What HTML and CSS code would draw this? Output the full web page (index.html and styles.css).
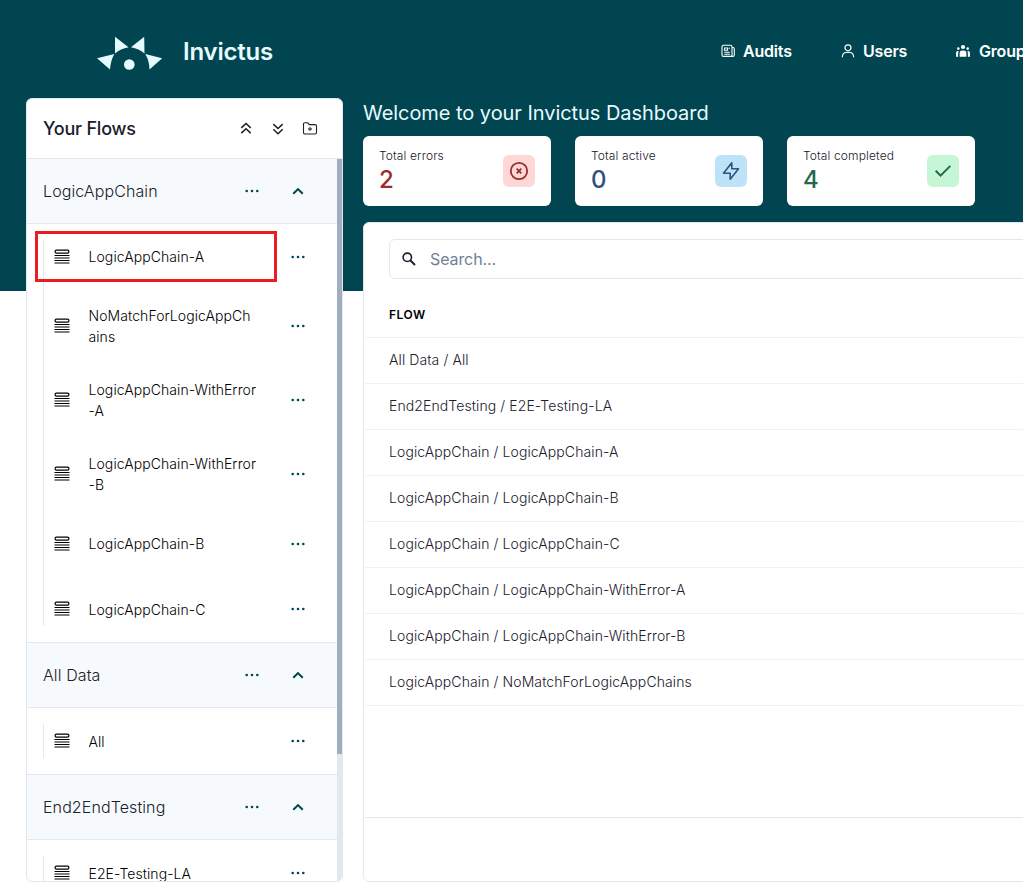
FILE: index.html
```html
<!DOCTYPE html>
<html lang="en">
<head>
<meta charset="utf-8">
<title>Invictus Dashboard</title>
<link rel="stylesheet" href="styles.css">
</head>
<body>
<svg class="defs" width="0" height="0">
  <symbol id="dots" viewBox="0 0 16 16"><circle cx="2.7" cy="8" r="1.3"/><circle cx="8" cy="8" r="1.3"/><circle cx="13.3" cy="8" r="1.3"/></symbol>
  <symbol id="up" viewBox="0 0 16 16"><path d="M3.3 10.8 8 6.1l4.700 4.700" fill="none" stroke="currentColor" stroke-width="2"/></symbol>
  <symbol id="stack" viewBox="0 0 16 16"><rect x="1.100" y="1.100" width="13.800" height="3" rx="1.300" fill="none" stroke="currentColor" stroke-width="1.200"/><path d="M.5 6.500h15M.5 9h15M.5 11.500h15M.5 14h15" fill="none" stroke="currentColor" stroke-width="1.200"/></symbol>
</svg>
<div class="page">
  <header class="topbar">
    <div class="brand">
      <svg class="logo" width="66" height="36" viewBox="0 0 66 36" fill="#e6fbff">
        <path d="M18 1.800 31.500 12.200Q23.500 13.500 18 18.500Z"/>
        <path d="M47.200 1.800 34 12.200Q42 13.500 47.500 18.500Z"/>
        <path d="M0 23.200 17.300 19Q13.500 26 13 34.500Z"/>
        <path d="M65.200 23.200 48.200 19Q52.500 26 52.500 34.500Z"/>
        <circle cx="32.300" cy="29.500" r="5.300"/>
      </svg>
      <span class="brand-name">Invictus</span>
    </div>
    <nav class="nav">
      <a class="nav-item audits"><svg width="14" height="14" viewBox="0 0 14 14" fill="none" stroke="currentColor" stroke-width="1.100"><rect x="1" y="1.200" width="10" height="11.200" rx="1.500"/><path d="M11 3.500h1q1.300 0 1.300 1.300v6.100q0 1.500-1.500 1.500H10"/><path d="M3.500 4h3v2.300h-3zM7.500 4.200h1.400M3.300 8.200h5.500M3.300 10.200h5.500"/></svg><span>Audits</span></a>
      <a class="nav-item users"><svg width="14" height="14" viewBox="0 0 14 14" fill="none" stroke="currentColor" stroke-width="1.200"><circle cx="7" cy="3.800" r="3"/><path d="M1.300 13.200q.2-4.700 4.200-4.700h3q4 0 4.200 4.700"/></svg><span>Users</span></a>
      <a class="nav-item groups"><svg width="16" height="14" viewBox="0 0 16 14" fill="currentColor"><circle cx="8" cy="3" r="2.100"/><circle cx="3.300" cy="4.600" r="1.300"/><circle cx="12.700" cy="4.600" r="1.300"/><path d="M4.600 12.700V9.500q0-3 2.500-3h1.800q2.500 0 2.500 3v3.200zM1 12.700V9.300q0-2.200 1.700-2.200h.9q-.7 1.200-.5 5.600zM15 12.700V9.300q0-2.200-1.700-2.200h-.9q.7 1.200.5 5.600z"/></svg><span>Groups</span></a>
    </nav>
  </header>
  <main class="content">
    <aside class="sidebar">
      <div class="side-head">
        <h2>Your Flows</h2>
        <div class="tools">
          <svg width="16" height="16" viewBox="0 0 16 16" fill="none" stroke="currentColor" stroke-width="1.500"><path d="m3.300 6.900 4.700-4.400 4.700 4.400M3.300 12.100 8 7.700l4.700 4.400"/></svg>
          <svg width="16" height="16" viewBox="0 0 16 16" fill="none" stroke="currentColor" stroke-width="1.500"><path d="M3.300 3.100 8 7.500l4.700-4.400M3.300 8.300 8 12.700l4.700-4.400"/></svg>
          <svg width="16" height="16" viewBox="0 0 16 16" fill="none" stroke="currentColor" stroke-width="1.100"><path d="M1.500 3q0-1.200 1.200-1.200h3.100l1.500 1.800h5.700q1.500 0 1.500 1.300v6.700q0 1.400-1.400 1.400H2.900q-1.400 0-1.400-1.400z"/><path d="M8 6v4M6 8h4" stroke-width="1.300" stroke-opacity=".8"/></svg>
        </div>
      </div>
      <div class="side-scroll">
        <div class="side-list">
          <div class="group"><span>LogicAppChain</span><svg><use href="#dots"/></svg><svg><use href="#up"/></svg></div>
          <div class="flows"><div class="flows-in">
            <div class="flow"><svg class="st"><use href="#stack"/></svg><span>LogicAppChain-A</span><svg class="dt"><use href="#dots"/></svg><i class="marker"></i></div>
            <div class="flow"><svg class="st"><use href="#stack"/></svg><span>NoMatchForLogicAppCh<br>ains</span><svg class="dt"><use href="#dots"/></svg></div>
            <div class="flow"><svg class="st"><use href="#stack"/></svg><span>LogicAppChain-WithError<br>-A</span><svg class="dt"><use href="#dots"/></svg></div>
            <div class="flow"><svg class="st"><use href="#stack"/></svg><span>LogicAppChain-WithError<br>-B</span><svg class="dt"><use href="#dots"/></svg></div>
            <div class="flow"><svg class="st"><use href="#stack"/></svg><span>LogicAppChain-B</span><svg class="dt"><use href="#dots"/></svg></div>
            <div class="flow"><svg class="st"><use href="#stack"/></svg><span>LogicAppChain-C</span><svg class="dt"><use href="#dots"/></svg></div>
          </div></div>
          <div class="group"><span>All Data</span><svg><use href="#dots"/></svg><svg><use href="#up"/></svg></div>
          <div class="flows single"><div class="flows-in">
            <div class="flow"><svg class="st"><use href="#stack"/></svg><span>All</span><svg class="dt"><use href="#dots"/></svg></div>
          </div></div>
          <div class="group"><span>End2EndTesting</span><svg><use href="#dots"/></svg><svg><use href="#up"/></svg></div>
          <div class="flows"><div class="flows-in">
            <div class="flow"><svg class="st"><use href="#stack"/></svg><span>E2E-Testing-LA</span><svg class="dt"><use href="#dots"/></svg></div>
          </div></div>
        </div>
        <div class="track"><div class="thumb"></div></div>
      </div>
    </aside>
    <section class="main">
      <h1>Welcome to your Invictus Dashboard</h1>
      <div class="cards">
        <div class="card red"><div><p>Total errors</p><b>2</b></div><div class="badge"><svg width="20" height="20" viewBox="0 0 20 20" fill="none" stroke="currentColor" stroke-width="1.800"><circle cx="10" cy="10" r="8.200"/><path d="m7.700 7.700 4.600 4.600M12.300 7.700l-4.600 4.600"/></svg></div></div>
        <div class="card blue"><div><p>Total active</p><b>0</b></div><div class="badge"><svg width="20" height="20" viewBox="0 0 20 20" fill="none" stroke="currentColor" stroke-width="1.600" stroke-linejoin="round"><path d="M10.800 1.800v6h6.700L9.200 18.200v-6H2.500z"/></svg></div></div>
        <div class="card green"><div><p>Total completed</p><b>4</b></div><div class="badge"><svg width="20" height="20" viewBox="0 0 20 20" fill="none" stroke="currentColor" stroke-width="2"><path d="m2.700 9.700 4.900 4.900 9.700-9.700"/></svg></div></div>
      </div>
      <div class="panel">
        <div class="search"><svg width="16" height="16" viewBox="0 0 16 16" fill="none" stroke="#1a202c" stroke-width="1.600"><circle cx="6.300" cy="6.300" r="4.200"/><path d="m9.500 9.500 4.500 4.500" stroke-width="1.900"/></svg><span>Search...</span></div>
        <div class="table">
          <div class="th">FLOW</div>
          <div class="tr">All Data / All</div>
          <div class="tr">End2EndTesting / E2E-Testing-LA</div>
          <div class="tr">LogicAppChain / LogicAppChain-A</div>
          <div class="tr">LogicAppChain / LogicAppChain-B</div>
          <div class="tr">LogicAppChain / LogicAppChain-C</div>
          <div class="tr">LogicAppChain / LogicAppChain-WithError-A</div>
          <div class="tr">LogicAppChain / LogicAppChain-WithError-B</div>
          <div class="tr">LogicAppChain / NoMatchForLogicAppChains</div>
        </div>
        <div class="foot"></div>
      </div>
    </section>
  </main>
</div>
</body>
</html>
```

FILE: styles.css
```css
* { box-sizing: border-box; margin: 0; padding: 0; }
body { font-family: Inter, "Liberation Sans", sans-serif; color: #1a202c; overflow: hidden; background: #fff; }
.defs { display: block; height: 0; }
svg { flex: none; display: block; }
.page { height: 895px; overflow: hidden; background: linear-gradient(#00454f 291px, #fff 291px); }
.topbar { height: 98px; display: flex; align-items: flex-start; justify-content: space-between; padding-left: 97px; }
.brand { display: flex; gap: 20px; padding-top: 35px; }
.brand-name { font-size: 24px; font-weight: 600; line-height: 34px; letter-spacing: -.2px; color: #e6fbff; }
.nav { display: flex; width: 302px; padding-top: 39px; overflow: hidden; white-space: nowrap; color: #fff; font-size: 16px; font-weight: 600; line-height: 25px; letter-spacing: -.2px; }
.nav-item { display: flex; align-items: center; gap: 8px; flex: none; }
.nav-item svg { margin-top: -1px; }
.audits { width: 120px; }
.users { width: 114px; }
.content { display: flex; gap: 20px; padding-left: 26px; }
.sidebar { width: 317px; height: 784px; flex: none; display: flex; flex-direction: column; background: #fff; border: 1px solid #e2e8f0; border-radius: 6px; overflow: hidden; }
.side-head { height: 60px; flex: none; border-bottom: 1px solid #e2e8f0; display: flex; justify-content: space-between; align-items: center; padding: 0 24px 0 16px; }
.side-head h2 { font-size: 18px; font-weight: 500; letter-spacing: -.2px; }
.tools { display: flex; gap: 16px; }
.side-scroll { flex: 1; min-height: 0; display: flex; }
.side-list { flex: 1; overflow: hidden; }
.track { width: 5px; background: #e2e8f0; }
.thumb { height: 595px; background: #a0aec0; }
.group { height: 65px; display: flex; align-items: center; background: #f7fafc; border-bottom: 1px solid #e2e8f0; padding: 0 31px 0 16px; font-size: 16px; font-weight: 300; gap: 30px; letter-spacing: .1px; }
.flows + .group { height: 66px; border-top: 1px solid #e2e8f0; }
.group span { flex: 1; }
.group svg { width: 16px; height: 16px; color: #00454f; fill: currentColor; }
.flows { padding: 16px; }
.flows-in { display: flex; flex-direction: column; gap: 32px; border-left: 1px solid #e2e8f0; }
.flow { position: relative; min-height: 33.330px; display: flex; align-items: center; padding: 0 15px 0 10px; font-size: 14px; font-weight: 300; line-height: 21px; letter-spacing: .08px; color: #000; }
.single .flow { min-height: 34.500px; }
.flow span { flex: 1; margin-left: 18.500px; white-space: nowrap; }
.flow svg { width: 16px; height: 16px; }
.flow .dt { fill: #00454f; }
.marker { position: absolute; left: -9px; top: -9px; width: 242px; height: 51px; border: 3px solid #ed1c24; }
.main { flex: 1; min-width: 0; }
.main h1 { font-size: 20px; font-weight: 400; line-height: 30px; height: 38px; letter-spacing: -.05px; color: #e6fbff; white-space: nowrap; }
.cards { display: flex; gap: 24px; }
.card { width: 188px; height: 70px; background: #fff; border-radius: 6px; padding: 12px 16px; display: flex; justify-content: space-between; align-items: center; }
.card p { font-size: 12px; font-weight: 300; line-height: 17px; letter-spacing: .13px; color: #1a202c; }
.card b { display: block; font-size: 24px; font-weight: 550; line-height: 32px; margin-bottom: -1px; }
.badge { width: 32px; height: 32px; border-radius: 6px; display: flex; align-items: center; justify-content: center; }
.red { color: #9b2c2c; } .red .badge { background: #fed7d7; }
.blue { color: #2c5282; } .blue .badge { background: #bee3f8; }
.green { color: #276749; } .green .badge { background: #c6f6d5; }
.panel { width: 700px; height: 660px; margin-top: 16px; background: #fff; border: 1px solid #e2e8f0; border-radius: 6px; padding-top: 16px; }
.search { height: 40px; margin: 0 25px; border: 1px solid #e2e8f0; border-radius: 6px; display: flex; align-items: center; gap: 13px; padding-left: 11px; font-size: 16px; letter-spacing: -.1px; color: #718096; }
.table { height: 539px; margin-left: 1px; border-bottom: 1px solid #e2e8f0; padding-top: 13px; }
.th { height: 46px; line-height: 45px; padding-left: 24px; font-size: 12px; font-weight: 600; letter-spacing: .5px; border-bottom: 1px solid #edf2f7; color: #000; }
.tr { height: 46px; line-height: 43px; padding-left: 24px; font-size: 14px; font-weight: 300; letter-spacing: .1px; border-bottom: 1px solid #edf2f7; }
```
